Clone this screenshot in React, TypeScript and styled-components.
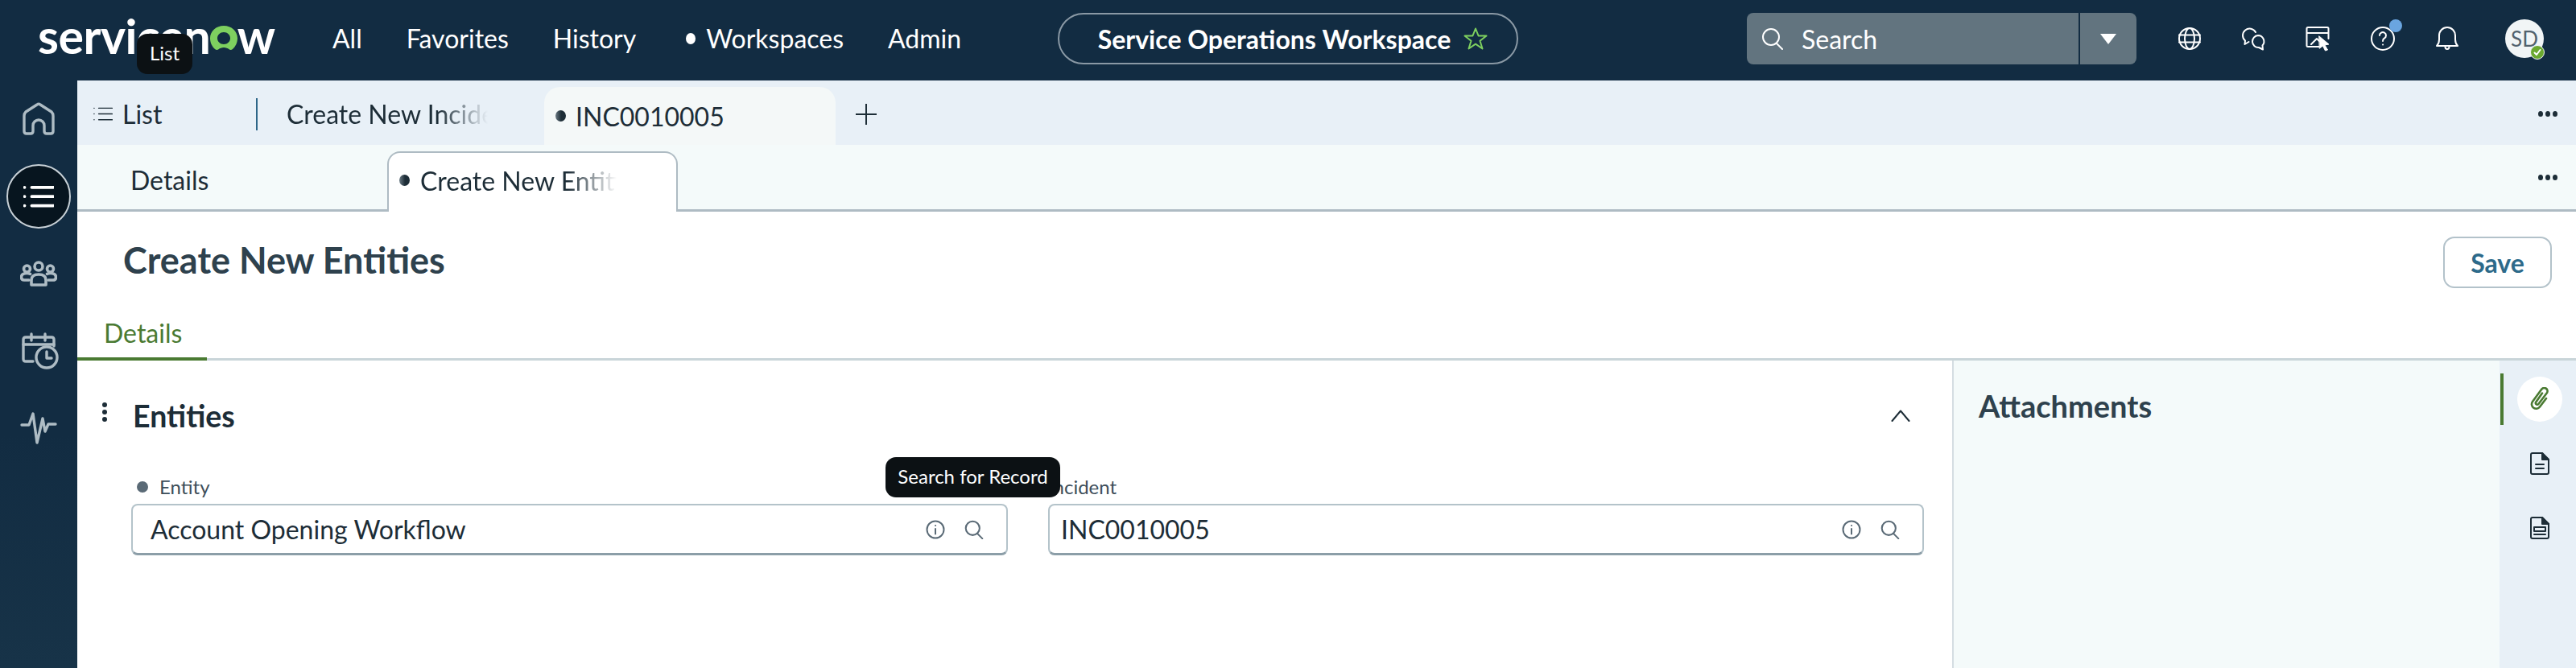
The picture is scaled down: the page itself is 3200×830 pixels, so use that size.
import React, { FunctionComponent } from 'react';
import styled, { createGlobalStyle } from 'styled-components';

const GlobalStyle = createGlobalStyle`
  html, body {
    margin: 0;
    padding: 0;
    background: #ffffff;
  }
  * {
    box-sizing: border-box;
  }
  body {
    font-family: 'Lato', 'Liberation Sans', sans-serif;
  }
`;

const Page = styled.div`
  position: relative;
  width: 3200px;
  height: 830px;
  overflow: hidden;
  display: flex;
  flex-direction: column;
  background: #ffffff;
`;

const TopBar = styled.header`
  height: 100px;
  flex: none;
  display: flex;
  align-items: center;
  padding: 0 0 4px 47px;
  background: #122c42;
  color: #ffffff;
`;

const Logo = styled.div`
  width: 296px;
  flex: none;
  display: flex;
  justify-content: flex-start;
  font-size: 59px;
  font-weight: 700;
  letter-spacing: -0.5px;
  line-height: 60px;
  margin-top: -6px;
  color: #ffffff;
`;

const LogoO = styled.span`
  position: relative;
  display: inline-block;
  color: transparent;
  svg {
    position: absolute;
    left: 0;
    top: 17px;
    width: 34px;
    height: 31px;
  }
`;

const Nav = styled.nav`
  width: 781px;
  flex: none;
  display: flex;
  align-items: center;
  gap: 55px;
  margin-left: 70px;
  font-size: 32px;
  line-height: 40px;
`;

const NavItem = styled.span`
  display: flex;
  align-items: center;
`;

const NavDot = styled.i`
  width: 12px;
  height: 14px;
  margin: 0 13px 0 7px;
  border-radius: 50%;
  background: #ffffff;
`;

const WorkspacePill = styled.div`
  width: 572px;
  height: 64px;
  margin-left: 120px;
  flex: none;
  display: flex;
  align-items: center;
  justify-content: center;
  gap: 16px;
  padding-left: 12px;
  border: 2px solid #8a99a5;
  border-radius: 32px;
  font-size: 32px;
  font-weight: 700;
`;

const SearchBox = styled.div`
  width: 484px;
  height: 64px;
  margin-left: 284px;
  flex: none;
  display: flex;
  border-radius: 8px;
  overflow: hidden;
  background: #62747f;
`;

const SearchField = styled.div`
  flex: 1;
  display: flex;
  align-items: center;
  gap: 22px;
  padding-left: 18px;
  font-size: 32px;
  border-right: 2px solid #122c42;
`;

const SearchCaret = styled.div`
  width: 70px;
  display: flex;
  align-items: center;
  justify-content: center;
  &::before {
    content: '';
    border-left: 10px solid transparent;
    border-right: 10px solid transparent;
    border-top: 13px solid #ffffff;
  }
`;

const HeaderIcons = styled.div`
  display: flex;
  align-items: center;
  gap: 40px;
  margin-left: 46px;
`;

const HeaderIcon = styled.div`
  position: relative;
  width: 40px;
  height: 40px;
  display: flex;
  align-items: center;
  justify-content: center;
`;

const NotifyDot = styled.i`
  position: absolute;
  left: 28px;
  top: -4px;
  width: 16px;
  height: 16px;
  border-radius: 50%;
  background: #6aa5e0;
`;

const Avatar = styled.div`
  position: relative;
  width: 48px;
  height: 48px;
  margin-left: 52px;
  flex: none;
  display: flex;
  align-items: center;
  justify-content: center;
  border-radius: 50%;
  background: #f1f5f6;
  color: #52626e;
  font-size: 26px;
`;

const AvatarBadge = styled.i`
  position: absolute;
  right: -1px;
  bottom: -2px;
  width: 18px;
  height: 18px;
  display: flex;
  align-items: center;
  justify-content: center;
  border-radius: 50%;
  background: #6aa92f;
  border: 1.5px solid #f1f5f6;
`;

const Body = styled.div`
  flex: 1;
  display: grid;
  grid-template-columns: 96px 1fr;
  min-height: 0;
`;

const SideBar = styled.aside`
  display: flex;
  flex-direction: column;
  background: linear-gradient(180deg, #122c42 60%, #173348 100%);
`;

const SideItem = styled.div`
  height: 96px;
  display: flex;
  align-items: center;
  justify-content: center;
`;

const SideActive = styled.div`
  width: 80px;
  height: 80px;
  display: flex;
  align-items: center;
  justify-content: center;
  border-radius: 50%;
  background: #07151f;
  border: 2px solid #c7d0d6;
`;

const Main = styled.main`
  display: flex;
  flex-direction: column;
  min-width: 0;
`;

const PrimaryTabs = styled.div`
  height: 80px;
  flex: none;
  display: flex;
  align-items: center;
  padding-top: 3px;
  background: #e8f0f7;
  color: #1d2d37;
  font-size: 32px;
`;

const ListTab = styled.div`
  width: 224px;
  height: 40px;
  display: flex;
  align-items: center;
  gap: 12px;
  padding-left: 20px;
  border-right: 2px solid #2d6688;
`;

const FadedTab = styled.div`
  width: 356px;
  padding-left: 36px;
  white-space: nowrap;
  overflow: hidden;
`;

const FadeText = styled.span<{ $width: number }>`
  display: block;
  width: ${(p) => p.$width}px;
  white-space: nowrap;
  overflow: hidden;
  mask-image: linear-gradient(90deg, #000 75%, transparent 100%);
`;

const ActiveTab = styled.div`
  width: 362px;
  height: 72px;
  align-self: flex-end;
  display: flex;
  align-items: center;
  gap: 12px;
  padding-left: 14px;
  border-radius: 20px 20px 0 0;
  background: #f4f8f8;
`;

const HalfDot = styled.i`
  width: 13px;
  height: 14px;
  flex: none;
  border-radius: 50%;
  background: linear-gradient(90deg, #6b7a84 0%, #1d2d37 55%);
`;

const AddTab = styled.div`
  margin-left: 25px;
  width: 26px;
  height: 26px;
  display: flex;
`;

const MoreDots = styled.div`
  margin-left: auto;
  margin-right: 23px;
  display: flex;
  gap: 3px;
  i {
    width: 6px;
    height: 7px;
    border-radius: 50%;
    background: #1d2d37;
  }
`;

const SecondaryTabs = styled.div`
  height: 83px;
  flex: none;
  display: flex;
  align-items: center;
  background: #f4fafa;
  border-bottom: 3px solid #aebbc3;
  color: #1d2d37;
  font-size: 32px;
`;

const DetailsTab = styled.div`
  width: 385px;
  padding: 6px 0 0 66px;
`;

const EntityTab = styled.div`
  width: 361px;
  height: 75px;
  align-self: flex-end;
  margin-bottom: -3px;
  display: flex;
  align-items: center;
  gap: 13px;
  padding: 0 0 5px 13px;
  background: #ffffff;
  border: 2px solid #aebbc3;
  border-bottom: none;
  border-radius: 16px 16px 0 0;
`;

const TitleRow = styled.div`
  height: 120px;
  flex: none;
  display: flex;
  align-items: center;
  justify-content: space-between;
  padding: 0 30px 0 57px;
`;

const Title = styled.h1`
  margin: 0;
  font-size: 45px;
  font-weight: 700;
  color: #2e414d;
`;

const SaveButton = styled.button`
  width: 135px;
  height: 64px;
  margin-top: 6px;
  border: 2px solid #b3c2ca;
  border-radius: 14px;
  background: #ffffff;
  color: #2d6a8a;
  font-family: inherit;
  font-size: 32px;
  font-weight: 700;
`;

const ContentTabs = styled.div`
  height: 65px;
  flex: none;
  display: flex;
  border-bottom: 3px solid #c9d5d9;
`;

const ContentTab = styled.div`
  width: 161px;
  height: 65px;
  padding: 11px 0 0 33px;
  border-bottom: 4px solid #4a7a32;
  color: #4a7a32;
  font-size: 32px;
`;

const Workspace = styled.div`
  flex: 1;
  display: grid;
  grid-template-columns: 1fr 680px 95px;
  min-height: 0;
`;

const FormArea = styled.section`
  padding: 44px 35px 0 67px;
`;

const SectionHead = styled.div`
  position: relative;
  height: 48px;
  display: flex;
  align-items: center;
  justify-content: space-between;
  padding-right: 17px;
`;

const SectionDots = styled.div`
  position: absolute;
  left: -36px;
  top: 8px;
  display: flex;
  flex-direction: column;
  gap: 3px;
  i {
    width: 6px;
    height: 6px;
    border-radius: 50%;
    background: #1d2d37;
  }
`;

const SectionName = styled.h2`
  margin: 0 0 0 2px;
  font-size: 37.5px;
  font-weight: 700;
  color: #1d2d37;
`;

const FieldGrid = styled.div`
  display: grid;
  grid-template-columns: 1089px 1088px;
  gap: 50px;
  margin-top: 51px;
`;

const Field = styled.div`
  display: flex;
  flex-direction: column;
  gap: 5px;
`;

const FieldLabel = styled.div`
  height: 30px;
  display: flex;
  align-items: center;
  gap: 14px;
  padding-bottom: 3px;
  font-size: 24px;
  color: #3d4e5a;
`;

const RequiredDot = styled.i`
  width: 14px;
  height: 14px;
  margin-left: 7px;
  border-radius: 50%;
  background: #5a6a76;
`;

const FieldBox = styled.div<{ $inset: number }>`
  height: 64px;
  display: flex;
  align-items: center;
  padding: 0 28px 0 ${(p) => p.$inset}px;
  border: 2px solid #b4c3ca;
  border-bottom: 3px solid #8c9ea8;
  border-radius: 8px;
  font-size: 32px;
  color: #1d2d37;
`;

const FieldValue = styled.span`
  flex: 1;
`;

const FieldIcons = styled.div`
  display: flex;
  align-items: center;
  gap: 24px;
`;

const AttachmentPanel = styled.aside`
  padding: 33px 31px;
  background: #f4fafa;
  border-left: 2px solid #d5dde2;
`;

const PanelTitle = styled.h2`
  margin: 0;
  font-size: 38px;
  font-weight: 700;
  color: #2e414d;
`;

const Rail = styled.div`
  display: flex;
  flex-direction: column;
  align-items: center;
  padding: 16px 0 0 1px;
  background: #e8f0f7;
`;

const RailSlot = styled.div<{ $active?: boolean }>`
  width: 100%;
  height: 64px;
  margin-bottom: 16px;
  display: flex;
  align-items: center;
  justify-content: center;
  border-left: 4px solid ${(p) => (p.$active ? '#4a7a32' : 'transparent')};
`;

const RailCircle = styled.div`
  width: 56px;
  height: 56px;
  display: flex;
  align-items: center;
  justify-content: center;
  border-radius: 50%;
  background: #ffffff;
`;

const Tooltip = styled.div<{ $left: number; $top: number; $width: number }>`
  position: absolute;
  left: ${(p) => p.$left}px;
  top: ${(p) => p.$top}px;
  width: ${(p) => p.$width}px;
  height: 50px;
  display: flex;
  align-items: center;
  justify-content: center;
  padding-bottom: 3px;
  border-radius: 13px;
  background: #0c1114;
  color: #ffffff;
  font-size: 24px;
`;

const CalendarNudge = styled.span`
  display: flex;
  margin-left: 4px;
`;

const SIDE = '#aebcc4';
const stroke = { fill: 'none', strokeLinecap: 'round', strokeLinejoin: 'round' } as const;

const HomeIcon = () => (
  <svg width="42" height="42" viewBox="0 0 42 42" {...stroke} stroke={SIDE} strokeWidth="3.4">
    <path d="M3 36V17q0-3 2-5L19 3q2-1.5 4 0l14 9q2 2 2 5v19q0 3-3 3h-5q-3 0-3-3v-7a7 7 0 0 0-14 0v7q0 3-3 3H6q-3 0-3-3Z" />
  </svg>
);

const ListIcon: FunctionComponent<{ color: string; size: number; weight: number }> = ({ color, size, weight }) => (
  <svg width={size} height={size * 0.8} viewBox="0 0 40 32" {...stroke} stroke={color} strokeWidth={weight}>
    <path d="M11 4h28M11 16h28M11 28h28" />
    <path d="M1.500 4h.1M1.500 16h.1M1.500 28h.1" />
  </svg>
);

const GroupIcon = () => (
  <svg width="46" height="32" viewBox="0 0 46 32" {...stroke} stroke={SIDE} strokeWidth="3.6">
    <circle cx="23" cy="7" r="5" />
    <circle cx="8.500" cy="10" r="4" />
    <circle cx="37.500" cy="10" r="4" />
    <path d="M14 30v-6q0-7 9-7t9 7v6Z" />
    <path d="M11 24H5q-3.500 0-3.500-3.500 0-5 7-5 2 0 4 .8" />
    <path d="M35 24h6q3.500 0 3.500-3.500 0-5-7-5-2 0-4 .8" />
  </svg>
);

const CalendarIcon = () => (
  <svg width="46" height="46" viewBox="0 0 46 46" {...stroke} stroke={SIDE} strokeWidth="3.400">
    <path d="M14 36H5q-3 0-3-3V9q0-3 3-3h32q3 0 3 3v8" />
    <path d="M2 15h38M12 2v8M29 2v8" />
    <circle cx="31" cy="31" r="13" />
    <path d="M31 24v8h6" />
  </svg>
);

const PulseIcon = () => (
  <svg width="46" height="42" viewBox="0 0 46 42" {...stroke} stroke={SIDE} strokeWidth="3.400">
    <path d="M2 17h9L16 3l5 36 7-30 3 16 4-9h9" />
  </svg>
);

const StarIcon = () => (
  <svg width="30" height="28" viewBox="0 0 30 28" fill="none" stroke="#7ed05f" strokeWidth="2" strokeLinejoin="round">
    <path d="M15 1.500l3.600 9h9.900l-8 6.300 3 9.700-8.500-5.800-8.500 5.800 3-9.700-8-6.300h9.900Z" />
  </svg>
);

const SearchIcon: FunctionComponent<{ color: string; size: number }> = ({ color, size }) => (
  <svg width={size} height={size} viewBox="0 0 28 28" {...stroke} stroke={color} strokeWidth={size > 24 ? 2 : 2.4}>
    <circle cx="12" cy="12" r="10" />
    <path d="M19 20l7 7" />
  </svg>
);

const GlobeIcon = () => (
  <svg width="30" height="30" viewBox="0 0 30 30" {...stroke} stroke="#fff" strokeWidth="2">
    <circle cx="15" cy="15" r="13" />
    <ellipse cx="15" cy="15" rx="6" ry="13" />
    <path d="M2 10.500h26M2 19.500h26" />
  </svg>
);

const ChatIcon = () => (
  <svg width="30" height="30" viewBox="0 0 30 30" {...stroke} stroke="#fff" strokeWidth="2">
    <path d="M17 7A8.500 8.500 0 1 0 4 17.500L3.500 22 8.500 19" />
    <path d="M20 11a7.500 7.500 0 1 0 1 15l5 2.500-.5-5A7.500 7.500 0 0 0 20 11Z" />
  </svg>
);

const CardIcon = () => (
  <svg width="32" height="32" viewBox="0 0 32 32" {...stroke} stroke="#fff" strokeWidth="2">
    <path d="M17 26H3q-1.500 0-1.500-1.500v-21Q1.500 2 3 2h24q1.500 0 1.500 1.500V16" />
    <path d="M2 9h26M7 23l7-7 3 3" />
    <path d="M17 13l12 10-5 1 3.500 6-3 1-3-6-4 3Z" fill="#fff" strokeWidth="1" />
  </svg>
);

const HelpIcon = () => (
  <svg width="32" height="32" viewBox="0 0 32 32" {...stroke} stroke="#fff" strokeWidth="2">
    <circle cx="16" cy="16" r="14" />
    <path d="M12 12a4 4 0 1 1 6 3.500q-2 1-2 3.500" />
    <path d="M16 23.500h.1" />
  </svg>
);

const BellIcon = () => (
  <svg width="30" height="32" viewBox="0 0 30 32" {...stroke} stroke="#fff" strokeWidth="2">
    <path d="M2 25q3-3 3-8v-5a10 10 0 0 1 20 0v5q0 5 3 8Z" />
    <path d="M12.500 26q0 3 2.500 3t2.500-3" />
  </svg>
);

const CheckIcon = () => (
  <svg width="10" height="10" viewBox="0 0 10 10" {...stroke} stroke="#fff" strokeWidth="2">
    <path d="M1.500 5.500l2.500 2.500 4.500-6" />
  </svg>
);

const PlusIcon = () => (
  <svg width="26" height="26" viewBox="0 0 26 26" fill="none" stroke="#1d2d37" strokeWidth="2">
    <path d="M13 0v26M0 13h26" />
  </svg>
);

const ChevronUp = () => (
  <svg width="24" height="15" viewBox="0 0 24 15" {...stroke} stroke="#1d2d37" strokeWidth="2">
    <path d="M1.500 14L12 1.500 22.500 14" />
  </svg>
);

const InfoIcon = () => (
  <svg width="24" height="24" viewBox="0 0 24 24" {...stroke} stroke="#5a6a76" strokeWidth="2">
    <circle cx="12" cy="12" r="10.500" />
    <path d="M12 11v6.500M12 7h.1" />
  </svg>
);

const ClipIcon = () => (
  <svg width="26" height="30" viewBox="0 0 26 30" {...stroke} stroke="#4a7a32" strokeWidth="2.600">
    <path d="M16 7.500L8 19a2 2 0 0 0 3.400 2L22 7a4 4 0 0 0-7-4L4 18a5.500 5.500 0 0 0 9 6.500L21 14" />
  </svg>
);

const DocIcon: FunctionComponent<{ boxed?: boolean }> = ({ boxed }) => (
  <svg width="24" height="28" viewBox="0 0 24 28" {...stroke} stroke="#1d2d37" strokeWidth="2">
    <path d="M3 1h12l8 8v16q0 2-2 2H3q-2 0-2-2V3q0-2 2-2Z" />
    <path d="M15 1v8h8Z" fill="#1d2d37" />
    {boxed ? (
      <>
        <rect x="5" y="13" width="14" height="5" />
        <path d="M5 22h14" />
      </>
    ) : (
      <path d="M7 15h10M7 20h10" />
    )}
  </svg>
);

const LogoRing = () => (
  <svg viewBox="0 0 34 31">
    <path
      fill="#7ed05f"
      fillRule="evenodd"
      d="M17 0C7.500 0 0 6.800 0 15.500 0 21 2.500 26 6 29c1.500 1.200 3 1.200 4.500.2C12 28 14.500 27 17 27s5 1 6.500 2.200c1.500 1 3 1 4.500-.2 3.500-3 6-8 6-13.500C34 6.800 26.500 0 17 0Zm0 8c4.500 0 8 3.200 8 7.500S21.500 23 17 23s-8-3.200-8-7.500S12.500 8 17 8Z"
    />
  </svg>
);

export default function App() {
  return (
    <Page>
      <GlobalStyle />
      <TopBar>
        <Logo>
          servicen
          <LogoO>
            o
            <LogoRing />
          </LogoO>
          w
        </Logo>
        <Nav>
          <NavItem>All</NavItem>
          <NavItem>Favorites</NavItem>
          <NavItem>History</NavItem>
          <NavItem>
            <NavDot />
            Workspaces
          </NavItem>
          <NavItem>Admin</NavItem>
        </Nav>
        <WorkspacePill>
          Service Operations Workspace
          <StarIcon />
        </WorkspacePill>
        <SearchBox>
          <SearchField>
            <SearchIcon color="#ffffff" size={28} />
            Search
          </SearchField>
          <SearchCaret />
        </SearchBox>
        <HeaderIcons>
          <HeaderIcon>
            <GlobeIcon />
          </HeaderIcon>
          <HeaderIcon>
            <ChatIcon />
          </HeaderIcon>
          <HeaderIcon>
            <CardIcon />
          </HeaderIcon>
          <HeaderIcon>
            <HelpIcon />
            <NotifyDot />
          </HeaderIcon>
          <HeaderIcon>
            <BellIcon />
          </HeaderIcon>
        </HeaderIcons>
        <Avatar>
          SD
          <AvatarBadge>
            <CheckIcon />
          </AvatarBadge>
        </Avatar>
      </TopBar>
      <Body>
        <SideBar>
          <SideItem>
            <HomeIcon />
          </SideItem>
          <SideItem>
            <SideActive>
              <ListIcon color="#ffffff" size={38} weight={4} />
            </SideActive>
          </SideItem>
          <SideItem>
            <GroupIcon />
          </SideItem>
          <SideItem>
            <CalendarNudge>
              <CalendarIcon />
            </CalendarNudge>
          </SideItem>
          <SideItem>
            <PulseIcon />
          </SideItem>
        </SideBar>
        <Main>
          <PrimaryTabs>
            <ListTab>
              <ListIcon color="#1d2d37" size={24} weight={2.4} />
              List
            </ListTab>
            <FadedTab>
              <FadeText $width={250}>Create New Incident</FadeText>
            </FadedTab>
            <ActiveTab>
              <HalfDot />
              INC0010005
            </ActiveTab>
            <AddTab>
              <PlusIcon />
            </AddTab>
            <MoreDots>
              <i />
              <i />
              <i />
            </MoreDots>
          </PrimaryTabs>
          <SecondaryTabs>
            <DetailsTab>Details</DetailsTab>
            <EntityTab>
              <HalfDot />
              <FadeText $width={244}>Create New Entities</FadeText>
            </EntityTab>
            <MoreDots>
              <i />
              <i />
              <i />
            </MoreDots>
          </SecondaryTabs>
          <TitleRow>
            <Title>Create New Entities</Title>
            <SaveButton>Save</SaveButton>
          </TitleRow>
          <ContentTabs>
            <ContentTab>Details</ContentTab>
          </ContentTabs>
          <Workspace>
            <FormArea>
              <SectionHead>
                <SectionDots>
                  <i />
                  <i />
                  <i />
                </SectionDots>
                <SectionName>Entities</SectionName>
                <ChevronUp />
              </SectionHead>
              <FieldGrid>
                <Field>
                  <FieldLabel>
                    <RequiredDot />
                    Entity
                  </FieldLabel>
                  <FieldBox $inset={22}>
                    <FieldValue>Account Opening Workflow</FieldValue>
                    <FieldIcons>
                      <InfoIcon />
                      <SearchIcon color="#5a6a76" size={24} />
                    </FieldIcons>
                  </FieldBox>
                </Field>
                <Field>
                  <FieldLabel>Incident</FieldLabel>
                  <FieldBox $inset={14}>
                    <FieldValue>INC0010005</FieldValue>
                    <FieldIcons>
                      <InfoIcon />
                      <SearchIcon color="#5a6a76" size={24} />
                    </FieldIcons>
                  </FieldBox>
                </Field>
              </FieldGrid>
            </FormArea>
            <AttachmentPanel>
              <PanelTitle>Attachments</PanelTitle>
            </AttachmentPanel>
            <Rail>
              <RailSlot $active>
                <RailCircle>
                  <ClipIcon />
                </RailCircle>
              </RailSlot>
              <RailSlot>
                <DocIcon />
              </RailSlot>
              <RailSlot>
                <DocIcon boxed />
              </RailSlot>
            </Rail>
          </Workspace>
        </Main>
      </Body>
      <Tooltip $left={170} $top={42} $width={69}>
        List
      </Tooltip>
      <Tooltip $left={1100} $top={568} $width={217}>
        Search for Record
      </Tooltip>
    </Page>
  );
}
